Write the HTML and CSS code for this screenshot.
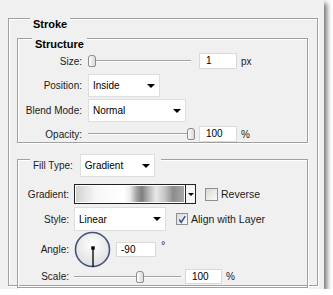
FILE: index.html
```html
<!DOCTYPE html>
<html lang="en">
<head>
    <meta charset="UTF-8">
    <title>Stroke</title>
    <link rel="stylesheet" href="styles.css">
</head>
<body>
    <div class="panel">
        <!-- Stroke group -->
        <div class="group outer">
            <div class="group-title stroke-title">Stroke</div>

            <!-- Structure -->
            <div class="group structure">
                <div class="group-title structure-title">Structure</div>

                <div class="row row-size">
                    <span class="lbl">Size:</span>
                    <div class="slider slider-size"><span class="thumb" style="margin-left: 0px"></span></div>
                    <div class="field field-size">1</div>
                    <span class="unit">px</span>
                </div>
                <div class="row row-position">
                    <span class="lbl">Position:</span>
                    <div class="select select-position"><span>Inside</span><i class="arrow"></i></div>
                </div>
                <div class="row row-blend">
                    <span class="lbl">Blend Mode:</span>
                    <div class="select select-blend"><span>Normal</span><i class="arrow"></i></div>
                </div>
                <div class="row row-opacity">
                    <span class="lbl">Opacity:</span>
                    <div class="slider slider-opacity"><span class="thumb" style="margin-left: 99px"></span></div>
                    <div class="field field-opacity">100</div>
                    <span class="unit">%</span>
                </div>
            </div>

            <!-- Fill Type -->
            <div class="group fill">
                <div class="group-title fill-title">
                    <span class="fill-label">Fill Type:</span>
                    <div class="select select-fill"><span>Gradient</span><i class="arrow"></i></div>
                </div>

                <div class="row row-gradient">
                    <span class="lbl lbl-fill">Gradient:</span>
                    <div class="swatch">
                        <span class="swatch-grad"></span>
                        <span class="swatch-btn"><i class="arrow arrow-small"></i></span>
                    </div>
                    <span class="check check-reverse"></span>
                    <span class="check-text">Reverse</span>
                </div>
                <div class="row row-style">
                    <span class="lbl lbl-fill">Style:</span>
                    <div class="select select-style"><span>Linear</span><i class="arrow"></i></div>
                    <span class="check check-align">
                        <svg width="11" height="11" viewBox="0 0 11 11"><path d="M2.5 5.5 L4.6 8.6 L9 1.8" fill="none" stroke="#2d4f9e" stroke-width="1.6"/></svg>
                    </span>
                    <span class="check-text">Align with Layer</span>
                </div>
                <div class="row row-angle">
                    <span class="lbl lbl-fill">Angle:</span>
                    <svg class="dial" width="37" height="37" viewBox="0 0 37 37">
                        <defs>
                            <radialGradient id="dialFill" cx="50%" cy="35%" r="65%">
                                <stop offset="0" stop-color="#ffffff"/>
                                <stop offset="1" stop-color="#dedede"/>
                            </radialGradient>
                        </defs>
                        <circle cx="18.5" cy="18.5" r="17" fill="url(#dialFill)" stroke="#45537c" stroke-width="1.6"/>
                        <line x1="19" y1="17" x2="19" y2="36" stroke="#000" stroke-width="1.3"/>
                        <rect x="17.3" y="15.3" width="3.4" height="3.4" fill="#000"/>
                    </svg>
                    <div class="field field-angle">-90</div>
                    <span class="degree">°</span>
                </div>
                <div class="row row-scale">
                    <span class="lbl lbl-fill">Scale:</span>
                    <div class="slider slider-scale"><span class="thumb" style="margin-left: 62px"></span></div>
                    <div class="field field-scale">100</div>
                    <span class="unit">%</span>
                </div>
            </div>
        </div>
    </div>
</body>
</html>
```
FILE: styles.css
```css
/* Reset */
* {
    margin: 0;
    padding: 0;
    box-sizing: border-box;
}
body {
    background-color: #ffffff;
    font-family: 'Liberation Sans', Arial, sans-serif;
    font-size: 10px;
    color: #1b1b1b;
}

/* Dialog panel */
.panel {
    width: 324px;
    height: 289px;
    padding: 18px 0 0 8px;
    background-color: #f0f0f0;
    box-shadow: 3px 3px 5px rgba(0, 0, 0, 0.55);
}

/* Etched group boxes */
.group {
    border: 1px solid #a0a0a0;
    box-shadow: 1px 1px 0 #ffffff, inset 1px 1px 0 #ffffff;
}
.group-title {
    display: inline-flex;
    align-items: center;
    background-color: #f0f0f0;
    font-weight: bold;
    font-size: 11px;
    line-height: 13px;
    color: #000;
    padding: 0 3px;
}
.outer {
    width: 310px;
    height: 268px;
    padding: 0 0 0 8px;
}
.stroke-title {
    margin: -7px 0 0 13px;
}
.structure {
    width: 291px;
    height: 105px;
    margin-top: 7px;
}
.structure-title {
    margin: -7px 0 0 14px;
}
.fill {
    width: 291px;
    height: 129px;
    margin-top: 16px;
}
.fill-title {
    margin: -10px 0 0 12px;
    padding: 0 6px 0 3px;
    font-weight: normal;
    font-size: 10px;
    gap: 7px;
}
.fill-label {
    color: #1b1b1b;
}

/* Rows */
.row {
    display: flex;
    align-items: center;
}
.lbl {
    width: 64px;
    margin-right: 6px;
    text-align: right;
    white-space: nowrap;
}
.lbl-fill {
    width: 51px;
    margin-right: 5px;
}
.row-size { height: 16px; margin-top: 2px; }
.row-position { height: 23px; margin-top: 5px; }
.row-blend { height: 23px; margin-top: 2px; }
.row-opacity { height: 16px; margin-top: 4px; }
.row-gradient { height: 20px; margin-top: 7px; }
.row-style { height: 24px; margin-top: 3px; }
.row-angle { height: 36px; }
.row-scale { height: 15px; margin-top: 2px; }

/* Sliders */
.slider {
    height: 12px;
    display: flex;
    align-items: center;
    background: linear-gradient(to bottom, transparent 5px, #a3a3a3 5px, #a3a3a3 6px, #ffffff 6px, #ffffff 7px, transparent 7px);
}
.slider-size { width: 103px; margin-right: 8px; }
.slider-opacity { width: 107px; margin-right: 4px; }
.slider-scale { width: 107px; margin-right: 4px; }
.thumb {
    width: 8px;
    height: 12px;
    border: 1px solid #8c8c8c;
    border-radius: 3px 3px 2px 2px;
    background: linear-gradient(to right, #fdfdfd, #d9d9d9);
}

/* Text fields */
.field {
    height: 16px;
    line-height: 14px;
    padding-left: 6px;
    background-color: #ffffff;
    border: 1px solid #dadada;
    color: #000;
}
.field-size,
.field-opacity {
    width: 38px;
}
.field-angle {
    width: 40px;
    height: 15px;
    margin-left: 5px;
    padding-left: 4px;
}
.field-scale {
    width: 37px;
    height: 15px;
}
.unit {
    margin-left: 4px;
    color: #1b1b1b;
}
.degree {
    align-self: flex-start;
    margin: 8px 0 0 5px;
    font-size: 11px;
}

/* Dropdowns */
.select {
    display: flex;
    justify-content: space-between;
    align-items: center;
    height: 23px;
    padding: 0 4px;
    background-color: #ffffff;
    border: 1px solid #dedede;
    color: #000;
}
.select-position { width: 72px; }
.select-blend { width: 98px; }
.select-fill { width: 75px; }
.select-style { width: 92px; height: 24px; }
.arrow {
    width: 0;
    height: 0;
    border-left: 4px solid transparent;
    border-right: 4px solid transparent;
    border-top: 4px solid #000;
}
.arrow-small {
    border-left-width: 3px;
    border-right-width: 3px;
    border-top-width: 3px;
}

/* Gradient swatch */
.swatch {
    display: flex;
    width: 122px;
    height: 20px;
    border: 1px solid #222;
    margin-right: 9px;
}
.swatch-grad {
    flex: 1;
    border: 1px solid #ffffff;
    background: linear-gradient(to right, #d2d2d2 0%, #f6f6f6 18%, #ffffff 44%, #ececec 50%, #a4a4a4 56%, #7e7e7e 61%, #b4b4b4 67%, #e8e8e8 74%, #c6c6c6 82%, #8c8c8c 90%, #a8a8a8 100%);
}
.swatch-btn {
    width: 10px;
    display: flex;
    align-items: center;
    justify-content: center;
    border-left: 1px solid #222;
    background-color: #f6f6f6;
}

/* Checkboxes */
.check {
    display: flex;
    align-items: center;
    justify-content: center;
    width: 13px;
    height: 13px;
    border: 1px solid #8e8f8f;
    background: linear-gradient(135deg, #d8d8d8, #fbfbfb);
}
.check-align {
    width: 12px;
    height: 12px;
    margin-left: 10px;
}
.check-text {
    margin-left: 3px;
    font-size: 10.5px;
    color: #1b1b1b;
}

.dial {
    display: block;
}
```
